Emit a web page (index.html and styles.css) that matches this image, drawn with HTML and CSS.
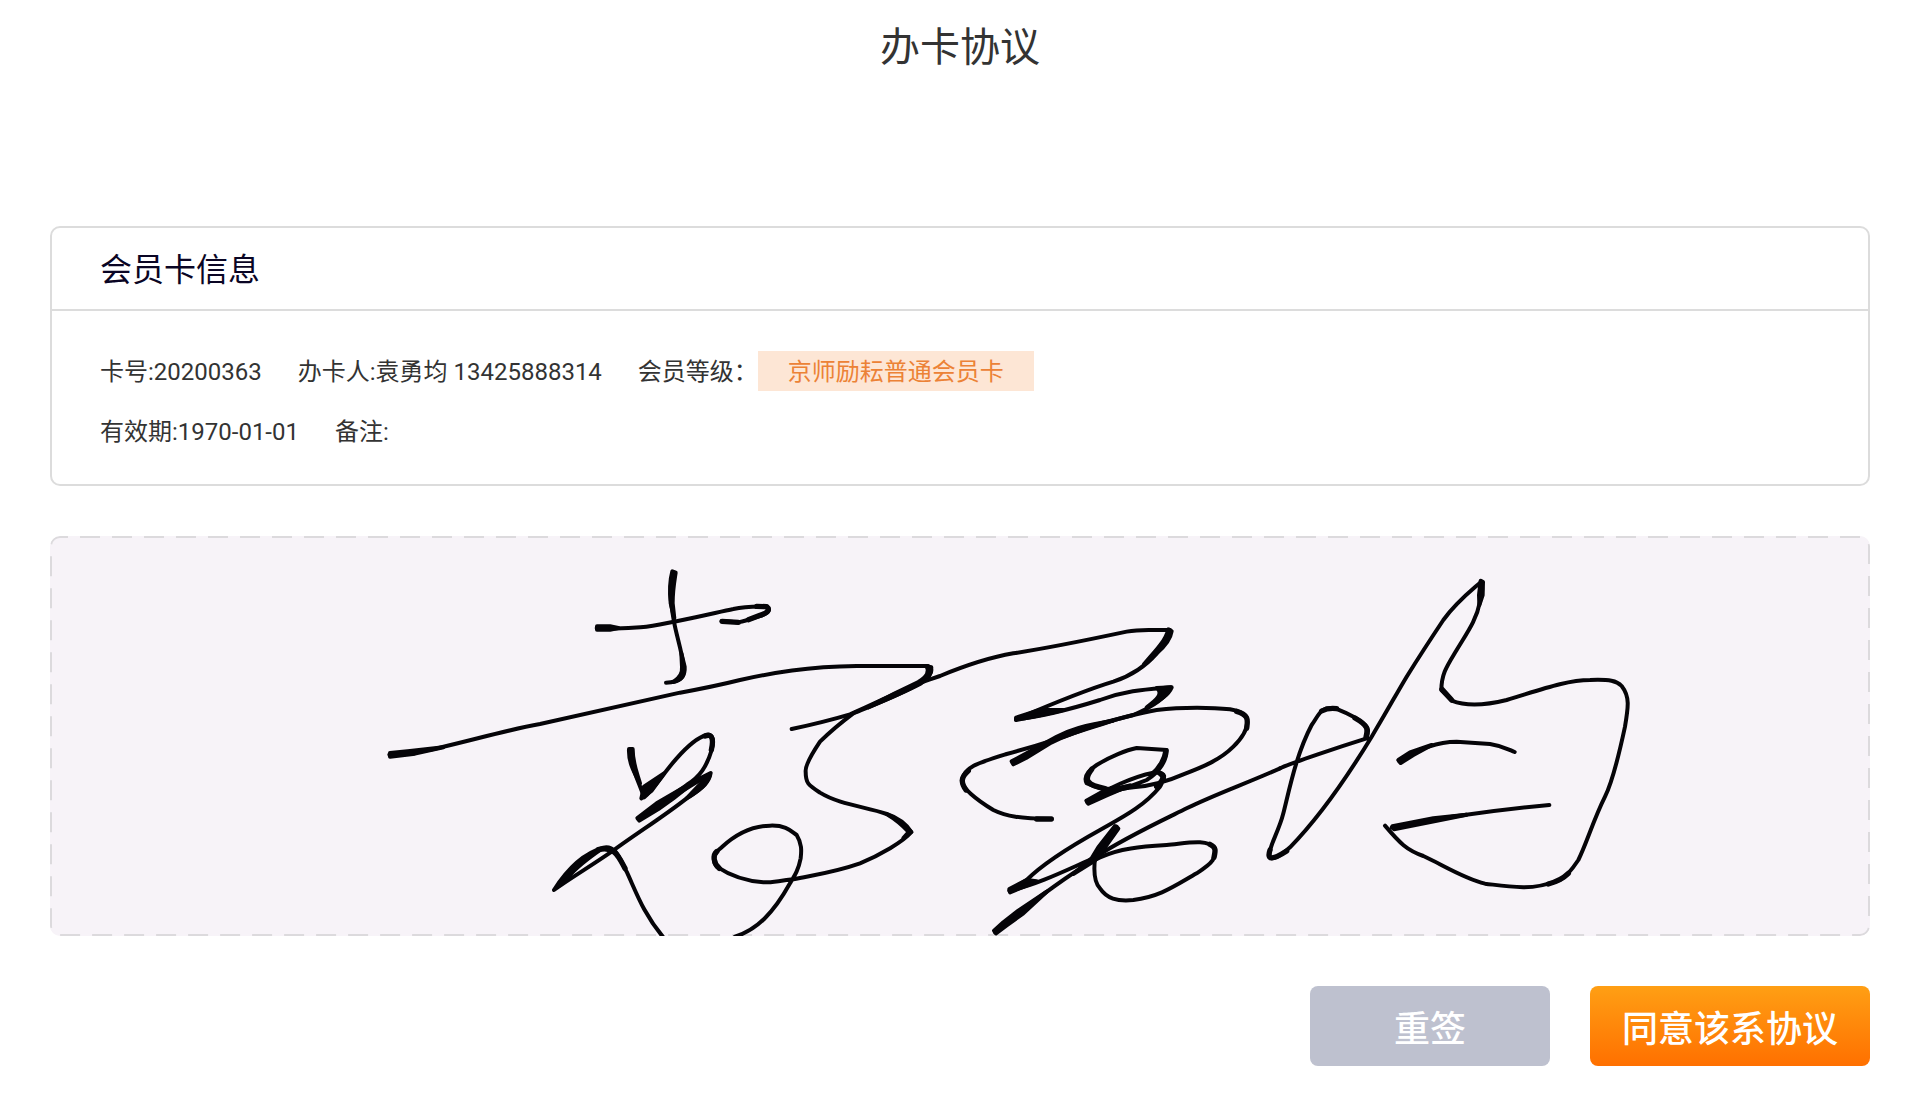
FILE: index.html
```html
<!DOCTYPE html>
<html lang="zh-CN">
<head>
  <meta charset="UTF-8">
  <meta name="viewport" content="width=device-width, initial-scale=1.0">
  <title>办卡协议</title>
  <link rel="stylesheet" href="styles.css">
</head>
<body>
  <h1 class="page-title">办卡协议</h1>

  <main class="container">
    <section class="card">
      <h2 class="card-title">会员卡信息</h2>
      <div class="card-body">
        <div class="info-row">
          <span>卡号:20200363</span>
          <span>办卡人:袁勇均 13425888314</span>
          <span>会员等级：<em class="tag">京师励耘普通会员卡</em></span>
        </div>
        <div class="info-row">
          <span>有效期:1970-01-01</span>
          <span>备注:</span>
        </div>
      </div>
    </section>

    <!-- 签名区域 -->
    <div class="sign-pad">
      <svg class="sign-border" aria-hidden="true">
        <rect x="1" y="1" rx="9" />
      </svg>
      <svg class="sign-ink" viewBox="0 0 5460 1200" role="img" aria-label="签名">
        <g transform="translate(1470 42)">
          <path d="M402 68 C386 110 390 150 402 215 C410 260 425 300 431 350 C436 385 420 396 378 398" />
          <path class="taper" d="M397 64 L407 68 C402 100 398 120 398 160 L403 205 L392 160 C388 120 390 90 397 64 Z" />
          <path class="taper" d="M424 310 L434 350 C436 378 425 390 400 396 C420 384 428 370 426 350 Z" />
          <path d="M170 234 C300 240 350 225 402 215 C480 200 540 185 580 177 C620 168 650 170 680 169 C692 178 690 188 660 198 C630 206 610 216 590 217 L545 213" />
          <path class="taper" d="M171 229 H210 L235 234 L210 239 H171 Z" />
          <path class="w2" d="M650 169 L680 170 C690 178 685 188 660 196 L625 209 M546 214 L595 217" />
          <path d="M-452 614 C-380 608 -340 602 -310 595 C-200 570 -100 540 0 522 C160 485 300 455 420 428 C520 410 560 400 600 390 C700 368 800 350 950 348 L1165 348 C1182 355 1175 380 1140 400 C1080 435 1000 465 940 490 C900 520 870 545 840 575 C810 620 795 650 797 665 C797 700 805 705 840 728 C900 765 980 770 1040 792 C1070 805 1095 825 1114 846 C1090 875 1020 915 960 940 C880 968 820 975 760 988 C700 995 690 998 670 997 C600 992 560 970 530 950 C515 930 520 910 545 892 C590 850 640 828 690 827 C740 825 755 845 770 855 C785 880 785 900 782 925 C775 960 765 975 750 1000 C700 1090 650 1140 585 1160" />
          <path class="taper" d="M-450 609 L-390 603 L-290 592 L-375 611 L-450 620 Z" />
          <path class="taper" d="M1160 350 L1174 352 C1176 372 1162 388 1140 402 C1090 428 1050 445 985 472 C1050 436 1100 412 1135 396 C1160 380 1170 365 1160 350 Z" />
          <path class="taper" d="M1040 792 C1070 802 1098 822 1114 846 L1090 864 L1106 846 C1090 828 1070 810 1040 792 Z" />
          <path class="w2" d="M538 955 C520 940 518 915 530 905" />
          <path d="M272 597 C270 650 295 690 312 742 C340 720 370 670 410 625 C450 580 480 560 500 555 C525 550 520 580 515 600 C500 650 480 680 440 705 C400 735 340 770 296 808 C350 770 430 720 510 672 C505 700 480 720 440 745 C370 800 290 850 215 905 C150 950 90 985 42 1020 C80 960 130 910 190 893 C230 885 240 930 260 965 C290 1030 310 1090 370 1162" />
          <path class="taper" d="M267 597 L278 597 C278 640 290 665 300 700 C285 670 265 640 267 597 Z" />
          <path class="taper" d="M304 745 L312 710 L372 670 L335 722 Z" />
          <path class="taper" d="M292 804 L350 760 L470 690 L400 745 L355 777 L298 812 Z" />
          <path class="taper" d="M470 690 L512 669 C508 695 492 712 440 745 L500 682 Z" />
          <path class="taper" d="M42 1020 L80 972 C115 935 150 908 190 895 C150 925 110 950 85 985 Z" stroke-width="8" />
          <path class="w2" d="M495 558 C520 548 520 575 514 600 M175 899 C225 885 238 925 255 955" />
        </g>
        <g transform="translate(2670 192)">
          <path d="M-445 387 C-380 373 -320 358 -270 343 C-180 305 -110 265 -30 238 L0 228 C80 195 150 172 220 160 C300 148 480 112 560 95 C610 85 640 92 690 90 C690 110 670 135 650 160 C620 195 580 225 520 245 C430 272 340 310 228 358 C300 350 400 325 480 300 C560 270 620 268 692 262 C680 290 640 320 580 345 C520 362 450 375 390 398 C320 430 270 460 218 488" />
          <path class="taper" d="M685 88 L695 94 C692 115 672 142 648 162 L612 192 C650 150 678 120 685 88 Z" />
          <path class="taper" d="M228 353 L300 330 L370 330 L300 346 L228 360 Z" />
          <path class="taper" d="M650 264 L695 262 C685 285 665 297 620 322 C650 300 672 280 650 264 Z" />
          <path class="taper" d="M215 484 L260 460 L350 410 C390 390 430 376 520 362 C430 390 380 404 330 430 L258 474 L220 493 Z" />
          <path d="M334 657 C240 655 200 650 160 630 C110 600 60 560 66 540 C75 500 110 490 200 462 C300 435 350 420 440 385 C520 360 590 340 650 330 C730 320 820 322 870 328 C905 335 922 345 922 365 C922 385 910 410 880 440 C840 480 790 500 730 523 C680 545 630 558 580 562 C520 572 470 565 440 550 C432 535 440 515 470 495 C510 470 560 450 590 444 L680 450 C680 480 660 515 620 540 C570 560 510 575 442 607 C500 565 580 530 640 518 C690 515 670 540 660 560 C610 620 550 650 480 690 C390 740 310 790 260 840 L208 872 C290 855 380 810 460 775 C560 710 680 655 740 625 C820 585 920 550 1020 505" />
          <path class="w2" d="M334 657 H290 M78 570 C60 545 65 530 85 512 M890 334 C930 345 922 365 920 385 M495 566 C440 555 430 540 455 508 M678 452 C675 475 660 505 635 525 M500 575 L560 562 M660 520 C678 530 665 545 650 560" />
          <path class="taper" d="M208 867 L260 840 L290 844 L210 877 Z" />
          <path class="taper" d="M439 602 L490 574 L570 556 L500 586 L445 611 Z" />
          <path d="M530 680 L465 775 C460 820 465 850 480 865 C500 895 530 905 580 900 C660 890 700 860 770 820 C825 785 825 775 825 745 C800 715 740 730 680 735 C600 740 540 745 480 772 C420 800 340 860 280 905 L165 997" />
          <path class="taper" d="M525 678 L535 686 L495 742 L465 782 L400 822 L455 775 L475 742 Z" />
          <path class="taper" d="M162 992 L190 967 L235 932 L320 875 L250 940 L200 976 L168 1000 Z" />
          <path class="w2" d="M810 733 C830 742 826 755 822 772" />
        </g>
        <g transform="translate(3570 72)">
          <path d="M120 625 C150 610 300 560 380 535 C387 510 385 505 375 495 C350 470 310 455 285 445 C240 440 240 460 215 495 C170 580 150 680 130 760 C115 820 85 860 88 890 C100 905 130 880 150 862 C230 780 310 670 395 530 C440 455 470 400 500 350 C550 270 580 225 610 180 C650 125 690 95 724 65 C730 90 725 110 720 125 C710 180 680 220 650 270 C620 320 605 340 604 390 L635 422 C680 440 740 435 800 420 C900 390 980 360 1050 360 C1110 358 1130 362 1145 378 C1170 410 1165 440 1155 500 C1140 570 1120 660 1095 710 C1060 780 1040 850 1015 900 C995 930 980 950 960 960 C920 975 890 982 850 982 C800 980 770 975 735 971 C670 955 600 910 550 888 C500 870 480 850 435 797" />
          <path class="w2" d="M345 474 C390 500 382 510 378 532 M245 453 C260 445 275 444 290 446 M90 870 C80 900 95 902 140 873 M606 388 L635 420 M925 972 C950 965 970 955 985 940" />
          <path class="taper" d="M722 62 L729 66 L728 105 L718 135 L717 105 Z" />
          <path d="M478 604 C530 570 590 545 650 545 L750 552 C790 558 805 568 824 576" />
          <path class="taper" d="M475 600 L510 577 L575 555 L520 585 L482 609 Z" />
          <path d="M455 803 C560 780 760 750 928 735" />
          <path class="taper" d="M457 799 L580 775 L680 764 L590 782 L462 808 Z" />
        </g>
      </svg>
    </div>

    <div class="actions">
      <button type="button" class="btn btn-reset">重签</button>
      <button type="button" class="btn btn-agree">同意该系协议</button>
    </div>
  </main>
</body>
</html>
```
FILE: styles.css
```css
* {
  box-sizing: border-box;
}

body {
  margin: 0;
  background: #fff;
  color: #333;
  font-family: Roboto, "Noto Sans CJK SC", sans-serif;
  font-size: 24px;
}

.page-title {
  margin: 0;
  padding: 18px 0 14px;
  font-size: 40px;
  font-weight: 400;
  line-height: 60px;
  text-align: center;
}

.container {
  margin-top: 134px;
  padding: 0 50px 50px;
}

/* 会员卡信息 */
.card {
  border: 2px solid #dcdcdc;
  border-radius: 10px;
}

.card-title {
  margin: 0;
  padding: 18px 48px 15px;
  border-bottom: 2px solid #dcdcdc;
  color: #0a0524;
  font-size: 32px;
  font-weight: 400;
  line-height: 48px;
}

.card-body {
  display: flex;
  flex-direction: column;
  gap: 20px;
  padding: 40px 48px 33px;
}

.info-row {
  display: flex;
  flex-wrap: wrap;
  align-items: flex-end;
  column-gap: 36px;
  min-height: 40px;
  line-height: 38px;
}

.tag {
  display: inline-block;
  padding: 2px 30px 0;
  background: #fde6d5;
  color: #ec8236;
  font-style: normal;
}

/* 签名区域 */
.sign-pad {
  position: relative;
  margin-top: 50px;
  border-radius: 10px;
  background: #f7f3f8;
  overflow: hidden;
}

.sign-border {
  position: absolute;
  inset: 0;
  width: 100%;
  height: 100%;
}

.sign-border rect {
  width: calc(100% - 2px);
  height: calc(100% - 2px);
  fill: none;
  stroke: #dcdadd;
  stroke-width: 2;
  stroke-dasharray: 20 12;
  stroke-dashoffset: 12;
}

.sign-ink {
  position: relative;
  display: block;
  width: 100%;
  fill: none;
  stroke: #050408;
  stroke-width: 12;
  stroke-linecap: round;
  stroke-linejoin: round;
}

.sign-ink .w2 {
  stroke-width: 16;
}

/* 起笔和收笔的粗细变化 */
.sign-ink .taper {
  fill: #050408;
}

/* 底部按钮 */
.actions {
  display: flex;
  justify-content: flex-end;
  gap: 40px;
  margin-top: 50px;
}

.btn {
  min-width: 240px;
  height: 80px;
  padding: 0 32px;
  border: none;
  border-radius: 8px;
  color: #fff;
  font-family: inherit;
  font-size: 36px;
  font-weight: 500;
  cursor: pointer;
}

.btn-reset {
  background: #bec1cf;
}

.btn-agree {
  background: linear-gradient(#ff9f14, #ff7000);
}
```
